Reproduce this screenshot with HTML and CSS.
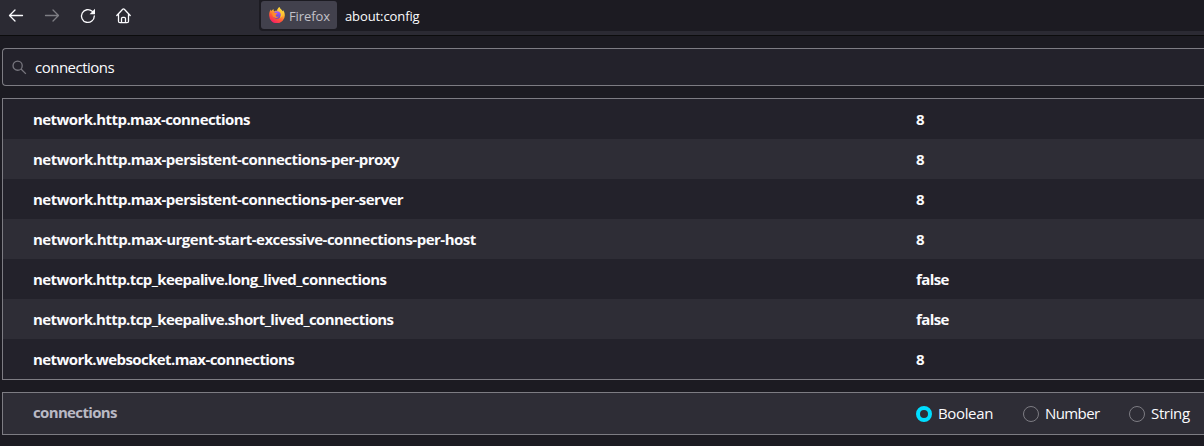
FILE: index.html
```html
<!DOCTYPE html>
<html lang="en">
<head>
<meta charset="utf-8">
<title>about:config</title>
<link rel="stylesheet" href="styles.css">
</head>
<body>
<header class="toolbar">
  <nav class="nav">
    <svg class="icon" viewBox="0 0 16 16"><path d="M14.500 7.500H1.700M7 2 1.500 7.500 7 13"/></svg>
    <svg class="icon disabled" viewBox="0 0 16 16"><path d="M1.500 7.500h12.800M9 2l5.500 5.500L9 13"/></svg>
    <svg class="icon" viewBox="0 0 16 16"><path d="M14.300 8A6.400 6.400 0 1 1 12.200 3.300l1 1"/><path class="solid" d="M15 .8v5.400H9.600z"/></svg>
    <svg class="icon" viewBox="0 0 16 16"><path d="M.8 7.500 6.700 1.300q.8-.8 1.600 0l5.900 6.200M2.500 6v7.200q0 1.500 1.500 1.500h7q1.500 0 1.500-1.500V6M5.500 14.500v-4q0-1.200 1.200-1.200h1.600q1.200 0 1.200 1.200v4"/></svg>
  </nav>
  <div class="urlbar">
    <div class="identity">
      <svg class="firefox" viewBox="0 0 16 16">
        <defs>
          <linearGradient id="flame" x1=".8" y1="0" x2=".25" y2="1"><stop offset="0" stop-color="#fff44f"/><stop offset=".35" stop-color="#ffb52e"/><stop offset=".65" stop-color="#ff5b36"/><stop offset="1" stop-color="#f5156c"/></linearGradient>
          <linearGradient id="globe" x1="0" y1="0" x2="0" y2="1"><stop offset="0" stop-color="#a45cff"/><stop offset="1" stop-color="#5b45c9"/></linearGradient>
        </defs>
        <path fill="url(#flame)" d="M10.4 0c-1.5 1-2 2.3-2.1 3.5C6.900 3.600 6 4 5.200 4.400 4.600 3.700 4.500 2.800 4.600 2 3.600 2.500 2.900 3.200 2.400 4 2 3.700 2 3.100 2 2.600.600 4.200 0 6.300.200 8.700a7.800 7.800 0 0 0 15.600-.4c0-2.200-.7-3.900-1.800-5.200.1.600.2 1 .1 1.500C13.100 2.800 10.900 2 10.400 0z"/>
        <circle cx="8" cy="8" r="3.7" fill="url(#globe)"/>
        <path fill="#ff8a2b" d="M2.800 5.400c1.700-.7 3 .1 3.600.7l2 .1c-.1.900-1.500 1.200-1.700 2.100 0 1.500 1.700 2.100 3.300 1-.8 2-5.100 2.400-6.400-.5z"/>
        <path fill="#ffca35" d="M8.400 3.600c2.200.3 3.500 1.600 3.700 3.400.2 2-1 3.300-1.500 3.700 3.300-.7 4-4.500 2.200-6.800C11.700 2.900 10.600 1.900 10.300.4 8.900 1.500 8.500 2.500 8.400 3.600z"/>
      </svg>
      <span>Firefox</span>
    </div>
    <span class="url">about:config</span>
  </div>
</header>
<main class="page">
  <div class="search">
    <svg class="search-icon" viewBox="0 0 16 16"><circle cx="6" cy="6" r="4.900"/><path d="m9.600 9.600 5.200 5.200"/></svg>
    <span>connections</span>
  </div>
  <div class="prefs">
    <div class="row"><span>network.http.max-connections</span><span>8</span></div>
    <div class="row long"><span>network.http.max-persistent-connections-per-proxy</span><span>8</span></div>
    <div class="row long"><span>network.http.max-persistent-connections-per-server</span><span>8</span></div>
    <div class="row longest"><span>network.http.max-urgent-start-excessive-connections-per-host</span><span>8</span></div>
    <div class="row snake"><span>network.http.tcp_keepalive.long_lived_connections</span><span>false</span></div>
    <div class="row snake"><span>network.http.tcp_keepalive.short_lived_connections</span><span>false</span></div>
    <div class="row snake"><span>network.websocket.max-connections</span><span>8</span></div>
  </div>
  <div class="add">
    <span class="add-name">connections</span>
    <div class="types">
      <div class="type boolean"><i class="radio checked"></i><span>Boolean</span></div>
      <div class="type number"><i class="radio"></i><span>Number</span></div>
      <div class="type"><i class="radio"></i><span>String</span></div>
    </div>
  </div>
</main>
</body>
</html>
```
FILE: styles.css
```css
* { box-sizing: border-box; }
body {
  margin: 0;
  height: 446px;
  overflow: hidden;
  background: #1c1b22;
  color: #fbfbfe;
  font: 15px/20px "Open Sans", "Noto Sans", sans-serif;
}
.toolbar {
  display: flex;
  height: 36px;
  background: #2b2a33;
  border-bottom: 1px solid #0c0c0d;
}
.nav {
  display: flex;
  gap: 20px;
  width: 259px;
  padding: 8px 0 0 8px;
}
.icon {
  width: 16px;
  height: 16px;
  fill: none;
  stroke: #fbfbfe;
  stroke-width: 1.3;
  stroke-linecap: round;
  stroke-linejoin: round;
}
.disabled { opacity: .4; }
.icon .solid { fill: #fbfbfe; stroke: none; }
.urlbar {
  display: flex;
  flex: 1;
  height: 31px;
  padding: 1px 0 0 2px;
  background: #1c1b22;
  border-radius: 0 0 0 4px;
  font-size: 13px;
  letter-spacing: -.1px;
}
.identity {
  display: flex;
  align-items: center;
  gap: 4px;
  width: 76px;
  height: 28px;
  padding-left: 8px;
  background: #42414d;
  border-radius: 3px;
  color: #c2c2c9;
}
.identity span { padding-top: 2px; }
.firefox { width: 16px; height: 16px; flex: none; }
.url { padding: 5px 0 0 8px; }
.page { padding: 12px 0 0 2px; }
.search {
  display: flex;
  align-items: center;
  gap: 8px;
  height: 38px;
  padding-left: 9px;
  background: #23222b;
  border: 1px solid #7d7c83;
  border-right: 0;
  border-radius: 4px 0 0 4px;
  letter-spacing: -.5px;
}
.search-icon {
  width: 15px;
  height: 15px;
  fill: none;
  stroke: #77767e;
  stroke-width: 1.4;
}
.prefs {
  margin-top: 12px;
  border: 1px solid #7d7c83;
  border-right: 0;
}
.row {
  display: grid;
  grid-template-columns: 883px 1fr;
  align-items: center;
  height: 40px;
  padding-left: 30px;
  background: #23222b;
  font-weight: 700;
  letter-spacing: -.56px;
}
.row:nth-child(even) { background: #2e2d36; }
.long { letter-spacing: -.52px; }
.longest { letter-spacing: -.5px; }
.snake { letter-spacing: -.59px; }
.add {
  display: grid;
  grid-template-columns: 883px 1fr;
  align-items: center;
  height: 43px;
  margin-top: 12px;
  padding-left: 30px;
  background: #2e2d36;
  border: 1px solid #7d7c83;
  border-right: 0;
}
.add-name { padding-bottom: 3px; color: #bab9c4; font-weight: 700; letter-spacing: -.65px; }
.types { display: flex; letter-spacing: -.35px; white-space: nowrap; }
.type { display: flex; align-items: center; gap: 6px; width: 106px; }
.type span { padding-bottom: 2px; }
.boolean { width: 107px; }
.number { letter-spacing: -.6px; }
.radio {
  flex: none;
  width: 16px;
  height: 16px;
  border: 1px solid #7d7c83;
  border-radius: 50%;
}
.checked { border: 4px solid #00ddff; }
```
